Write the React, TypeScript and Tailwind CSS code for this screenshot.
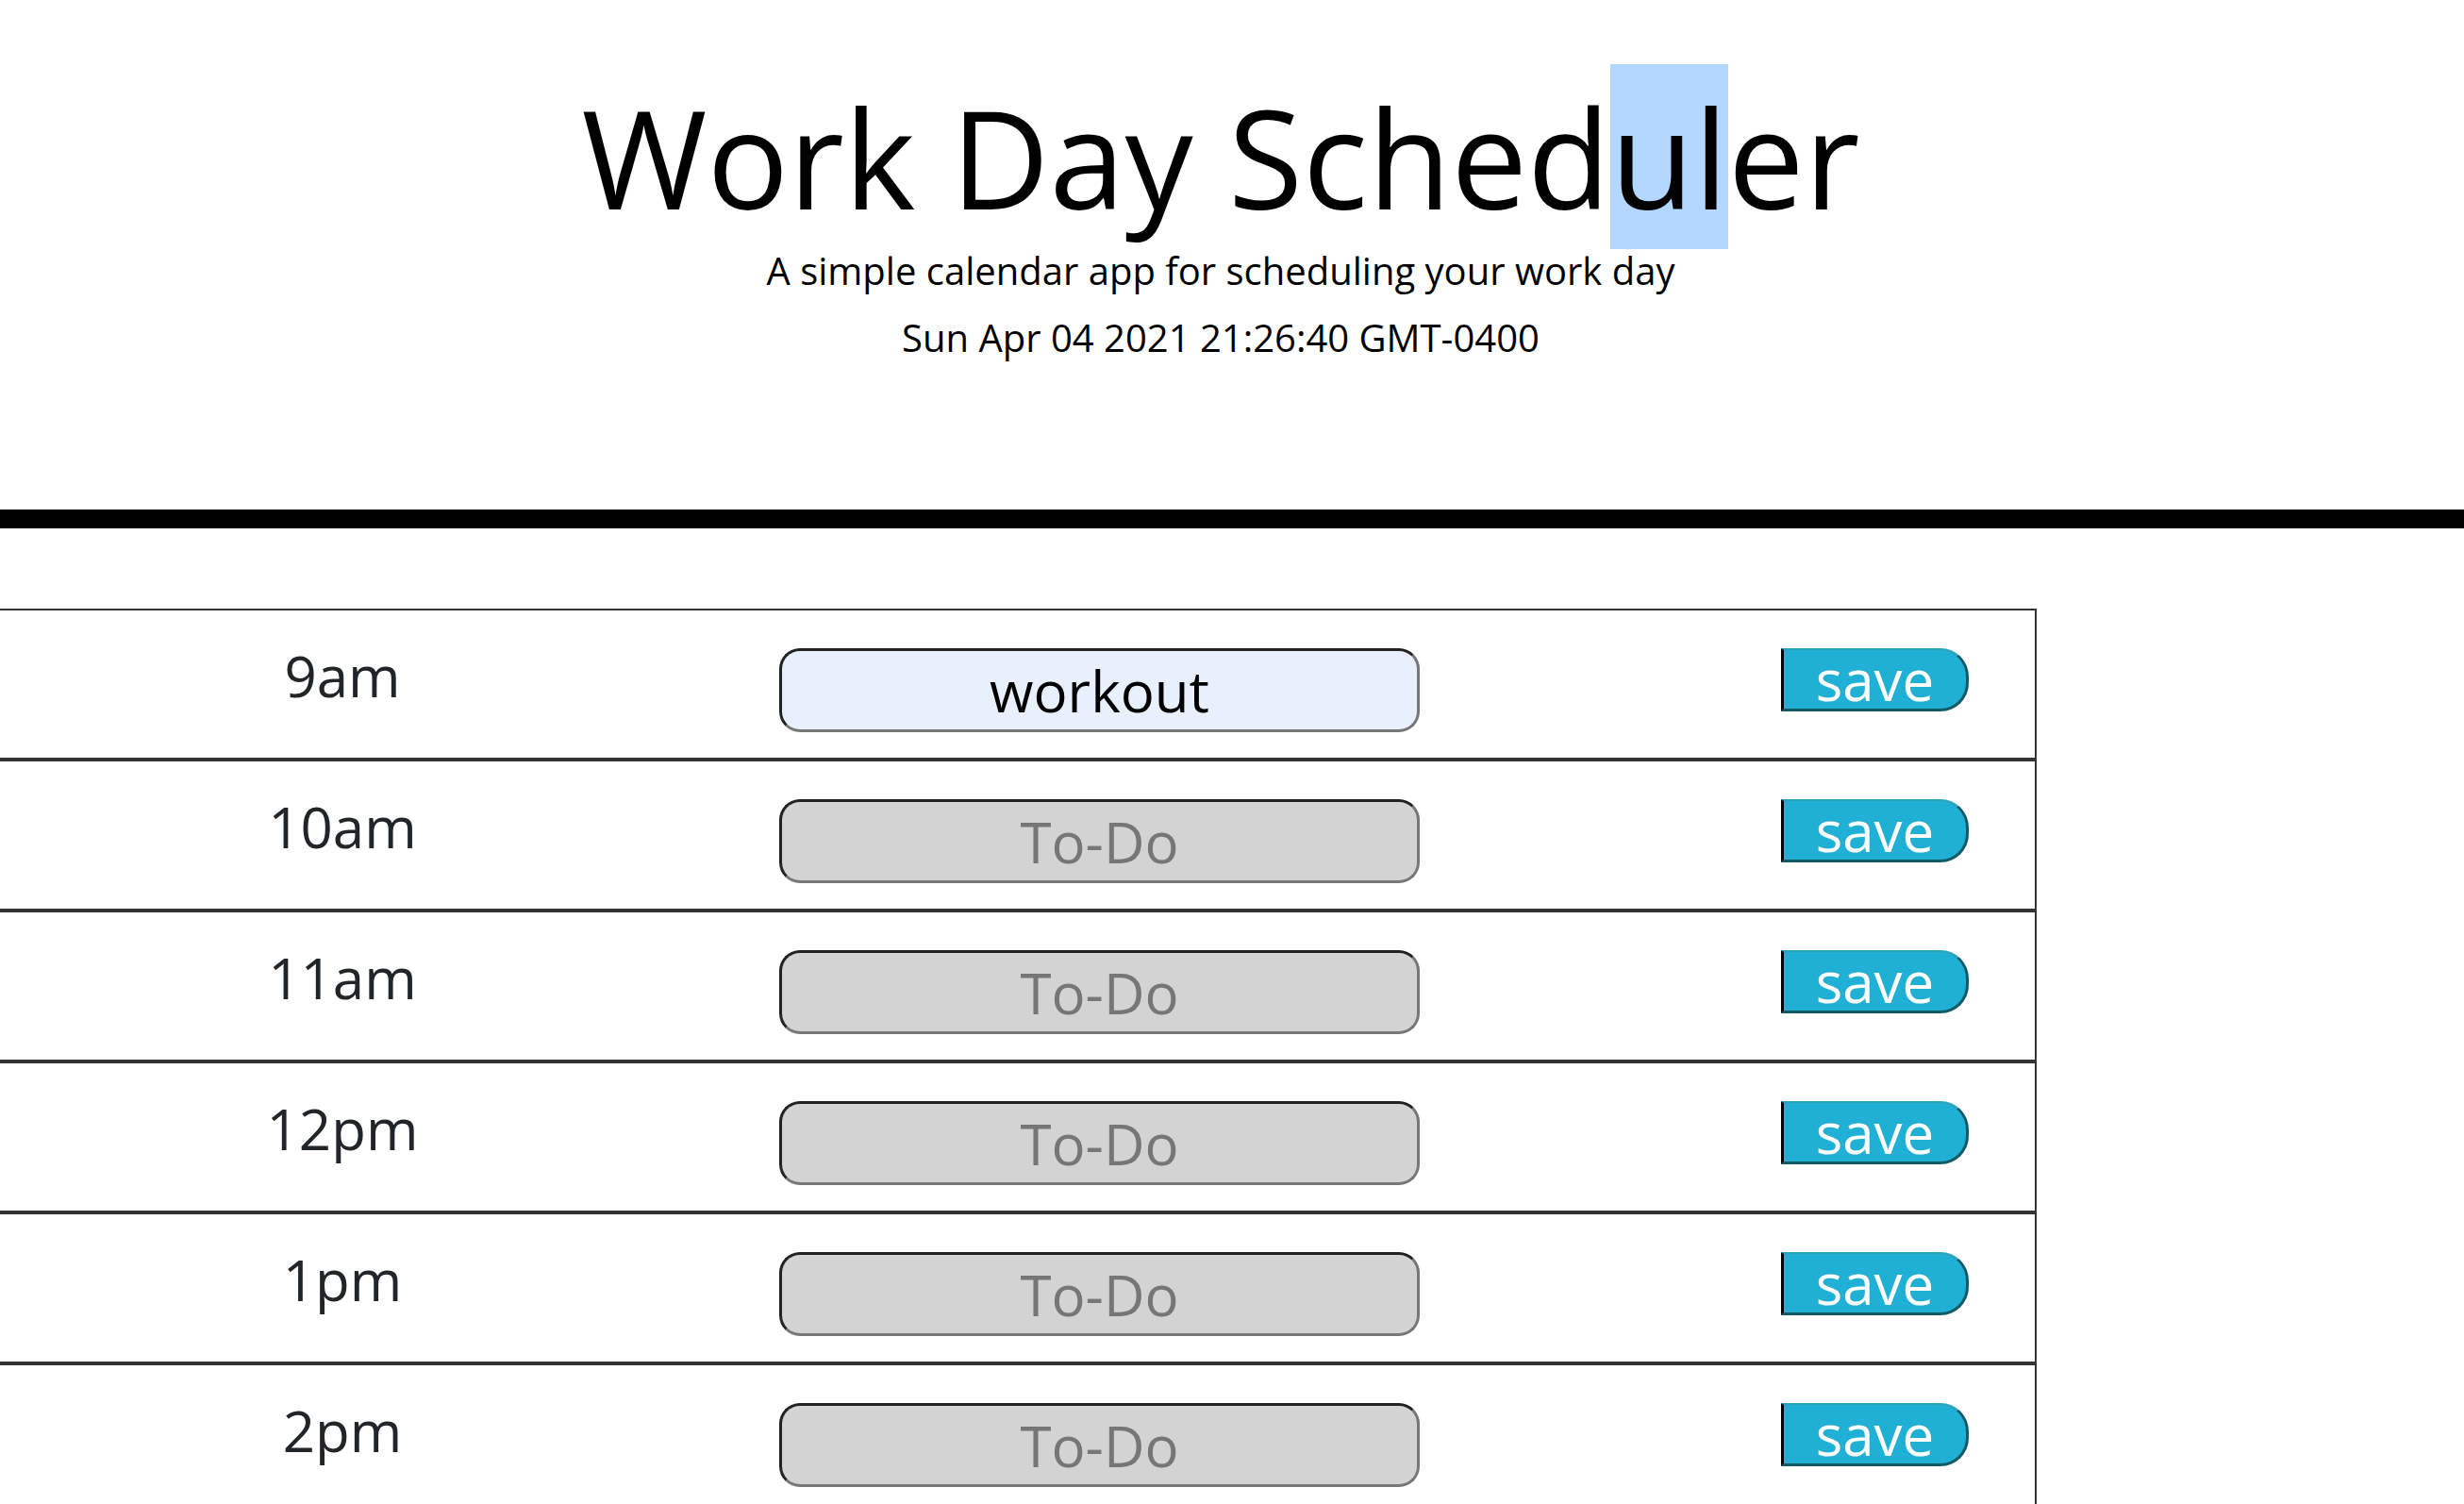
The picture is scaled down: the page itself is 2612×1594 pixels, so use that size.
import React from 'react'

interface HourRow {
  label: string
  value?: string
}

const hours: HourRow[] = [
  { label: '9am', value: 'workout' },
  { label: '10am' },
  { label: '11am' },
  { label: '12pm' },
  { label: '1pm' },
  { label: '2pm' },
  { label: '3pm' },
  { label: '4pm' },
  { label: '5pm' },
]

function TimeBlock({ label, value }: HourRow) {
  const filled = Boolean(value)

  return (
    <div className="flex items-start w-[2159px] h-[160px] border-t-2 border-b-2 border-r-2 border-[#343434]">
      <div className="w-[726px] mt-[39px] text-center text-[60px] leading-none text-[#212529]">{label}</div>

      <input
        type="text"
        defaultValue={value}
        placeholder="To-Do"
        className={
          filled
            ? 'ml-[100px] mt-[40px] w-[679px] h-[89px] rounded-[22px] border-[3px] border-t-[#222] border-l-[#222] border-b-[#777] border-r-[#777] bg-[#e8f0fe] text-center text-[60px] text-black font-["Open_Sans",sans-serif] outline-none'
            : 'ml-[100px] mt-[40px] w-[679px] h-[89px] rounded-[22px] border-[3px] border-t-[#222] border-l-[#222] border-b-[#777] border-r-[#777] bg-[#d3d3d3] text-center text-[60px] text-black placeholder:text-[#767676] font-["Open_Sans",sans-serif] outline-none'
        }
      />

      <button
        type="button"
        className="ml-[383px] mt-[40px] w-[199px] h-[67px] flex items-center justify-center bg-[#20b0d5] text-white text-[60px] leading-none rounded-r-[30px] border-l-[3px] border-l-black border-t-2 border-t-[#2aa3bd] border-b-[3px] border-b-[#145a64] border-r-[3px] border-r-[#145a64] font-['Open_Sans',sans-serif]"
      >
        save
      </button>
    </div>
  )
}

export default function App() {
  return (
    <div className="min-h-screen bg-white text-black font-['Open_Sans',sans-serif]">
      {/* Header */}
      <header className="w-full border-b-[20px] border-black pt-[94px] pb-[162px]">
        <div className="w-[2588px] text-center">
          <h1 className="text-[144px] leading-none font-normal">
            Work Day Sched<span className="bg-[#b3d7fe]">ul</span>er
          </h1>
          <p className="mt-[29px] text-[40px] leading-none">A simple calendar app for scheduling your work day</p>
          <p className="mt-[31px] text-[40px] leading-none">Sun Apr 04 2021 21:26:40 GMT-0400</p>
        </div>
      </header>

      {/* Hour blocks */}
      <div className="mt-[85px]">
        {hours.map((h) => (
          <TimeBlock key={h.label} label={h.label} value={h.value} />
        ))}
      </div>
    </div>
  )
}
